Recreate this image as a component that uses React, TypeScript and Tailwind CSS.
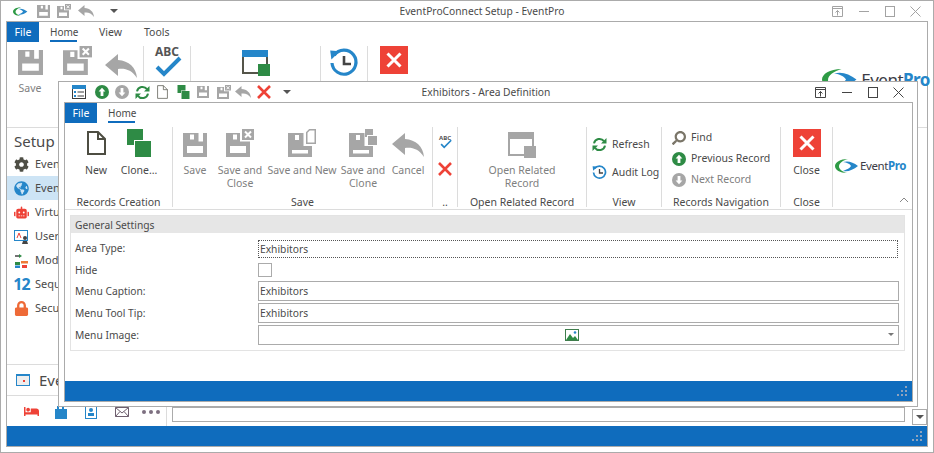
import type { ReactNode } from 'react'
import { FaBed, FaCog, FaGlobeAmericas, FaLock, FaRobot, FaSearch } from 'react-icons/fa'

const GRAY = '#a6a6a6'

function SaveIcon({ size = 24, color = GRAY }: { size?: number; color?: string }) {
  return (
    <svg width={size} height={size} viewBox="0 0 24 24" className="shrink-0">
      <path fill={color} fillRule="evenodd" d="M0 0H24V24H0ZM15.5 0V8.5H20V0ZM4 13H20V20H4ZM7 1.5H11V6.5H7Z" />
    </svg>
  )
}

function SaveCloseIcon({ size = 28, color = GRAY }: { size?: number; color?: string }) {
  return (
    <svg width={size} height={size} viewBox="0 0 28 28" className="shrink-0">
      <path fill={color} fillRule="evenodd" d="M0 4H14V12.5H24V28H0ZM4 17H20V24H4ZM7 5.5H11V10.5H7Z" />
      <rect x="16" y="0" width="12" height="11" fill={color} />
      <path d="M19 2.5L25 8.5M25 2.5L19 8.5" stroke="#fff" strokeWidth="2" />
    </svg>
  )
}

function SaveNewIcon() {
  return (
    <svg width="28" height="28" viewBox="0 0 28 28" className="shrink-0">
      <path fill={GRAY} fillRule="evenodd" d="M0 4H15.5V17H24V28H0ZM4 21H20V24.5H4ZM7 6H11V11H7Z" />
      <path d="M18.75 3.5L21.5.75H27.25V14.25H18.75Z" fill="none" stroke={GRAY} strokeWidth="1.5" />
    </svg>
  )
}

function SaveCloneIcon() {
  return (
    <svg width="28" height="28" viewBox="0 0 28 28" className="shrink-0">
      <path fill={GRAY} fillRule="evenodd" d="M0 4H15.5V17H24V28H0ZM4 21H20V24.5H4ZM7 6H11V11H7Z" />
      <rect x="16" y="0" width="8" height="8" fill={GRAY} />
      <rect x="18" y="6" width="10" height="10" fill="#fff" />
      <rect x="19" y="7" width="9" height="9" fill={GRAY} />
    </svg>
  )
}

function UndoIcon({ w = 32, h = 24, color = GRAY }: { w?: number; h?: number; color?: string }) {
  return (
    <svg width={w} height={h} viewBox="0 0 32 24" className="shrink-0">
      <path fill={color} d="M13 0L0 11L13 22V15C20 14 27 16 32 24C31 13 24 7 13 6Z" />
    </svg>
  )
}

function NewIcon({ w = 19, h = 24, sw = 2 }: { w?: number; h?: number; sw?: number }) {
  return (
    <svg width={w} height={h} viewBox="0 0 19 24" className="shrink-0">
      <path d="M1 1H11L18 8V23H1Z M11 1V8H18" fill="none" stroke="#4d4d42" strokeWidth={sw} />
    </svg>
  )
}

function CloneIcon({ w = 24, h = 28 }: { w?: number; h?: number }) {
  return (
    <svg width={w} height={h} viewBox="0 0 24 28" className="shrink-0">
      <rect x="0" y="0" width="16" height="16" fill="#2e8b45" />
      <rect x="7" y="11" width="17" height="17" fill="#fff" />
      <rect x="8" y="12" width="16" height="16" fill="#2e8b45" />
    </svg>
  )
}

function RedX({ size = 14, sw = 2.6 }: { size?: number; sw?: number }) {
  return (
    <svg width={size} height={size} viewBox="0 0 14 14" className="shrink-0">
      <path d="M1 1L13 13M13 1L1 13" stroke="#ee4237" strokeWidth={sw} />
    </svg>
  )
}

function RedBox({ size = 28 }: { size?: number }) {
  return (
    <svg width={size} height={size} viewBox="0 0 28 28" className="shrink-0">
      <rect width="28" height="28" fill="#ee4237" />
      <path d="M7.5 7.5L20.5 20.5M20.5 7.5L7.5 20.5" stroke="#fff" strokeWidth="3" />
    </svg>
  )
}

function RoundArrow({ up, color, size = 14 }: { up: boolean; color: string; size?: number }) {
  return (
    <svg width={size} height={size} viewBox="0 0 14 14" className="shrink-0">
      <circle cx="7" cy="7" r="7" fill={color} />
      <path fill="#fff" d={up ? 'M7 2.8L10.4 6.6H8.4V11H5.6V6.6H3.6Z' : 'M7 11.2L10.4 7.4H8.4V3H5.6V7.4H3.6Z'} />
    </svg>
  )
}

function RefreshIcon({ size = 15 }: { size?: number }) {
  return (
    <svg width={size} height={size} viewBox="0 0 15 15" className="shrink-0">
      <path d="M2 6.4A5.6 5.6 0 0 1 12 4.2" fill="none" stroke="#2e8b45" strokeWidth="2" />
      <path d="M13 8.6A5.6 5.6 0 0 1 3 10.8" fill="none" stroke="#2e8b45" strokeWidth="2" />
      <path d="M14.5 1V6.5H9Z" fill="#2e8b45" />
      <path d="M.5 14V8.5H6Z" fill="#2e8b45" />
    </svg>
  )
}

function HistoryIcon({ size = 15, sw = 1.7 }: { size?: number; sw?: number }) {
  return (
    <svg width={size} height={size} viewBox="0 0 15 15" className="shrink-0">
      <path d="M2.6 3.6A6 6 0 1 1 1.5 7.5" fill="none" stroke="#2586c9" strokeWidth={sw} />
      <path d="M0.6 1.2L5.4 1.6L1.2 5.8Z" fill="#2586c9" />
      <path d="M7.5 4V8H11" fill="none" stroke="#444" strokeWidth="1.3" />
    </svg>
  )
}

function AbcCheck({ w = 30, h = 32, big = true }: { w?: number; h?: number; big?: boolean }) {
  return (
    <div className="relative shrink-0" style={{ width: w, height: h }}>
      <span
        className={`absolute left-0 top-0 w-full text-center font-bold text-[#555] leading-none ${big ? 'text-[12px]' : 'text-[6px]'}`}
      >
        ABC
      </span>
      <svg width={w} height={h} viewBox="0 0 30 32" className="absolute left-0 top-0">
        <path d="M5 21L12 28L28 12" fill="none" stroke="#2586c9" strokeWidth="4" />
      </svg>
    </div>
  )
}

function RelatedIcon({ active }: { active: boolean }) {
  const top = active ? '#2586c9' : GRAY
  const line = active ? '#55554a' : GRAY
  const box = active ? '#2e8b45' : GRAY
  return (
    <svg width="28" height="26" viewBox="0 0 28 26" className="shrink-0">
      <rect width="26" height="7" fill={top} />
      <path d="M1 7V23H16" fill="none" stroke={line} strokeWidth="2" />
      <path d="M25 7V14" stroke={line} strokeWidth="2" />
      <rect x="16" y="14" width="12" height="12" fill={box} />
    </svg>
  )
}

function ListIcon() {
  return (
    <svg width="14" height="14" viewBox="0 0 14 14" className="shrink-0">
      <rect x=".5" y=".5" width="13" height="13" fill="#fff" stroke="#3c3c3c" />
      <rect width="14" height="4" fill="#2586c9" />
      <rect x="2" y="6" width="2" height="2" fill="#2586c9" />
      <rect x="2" y="10" width="2" height="2" fill="#2586c9" />
      <path d="M5.5 7H12M5.5 11H12" stroke="#3c3c3c" />
    </svg>
  )
}

function LogoMark({ w = 24, h = 14 }: { w?: number; h?: number }) {
  return (
    <svg width={w} height={h} viewBox="0 0 24 14" className="shrink-0">
      <path fill="#2e9b45" d="M13 0C5 0 0 3.5 0 7C0 11 5 14 12 14C7 12.5 4 10 4 7.5C4 4 8 1.5 13 0Z" />
      <path fill="#2586c9" d="M8 3C13 1.5 18 3 23 7C18 11 13 13 8 12C12 10.5 15 9 16 7C15 5 12 3.5 8 3Z" />
    </svg>
  )
}

function Logo({ className }: { className?: string }) {
  return (
    <div className={`flex items-center gap-[1px] ${className ?? ''}`}>
      <LogoMark />
      <span className="text-[11.5px] leading-none tracking-[-0.4px] text-[#3c3c46]">
        Event<span className="text-[#2586c9] font-bold">Pro</span>
      </span>
    </div>
  )
}

function WinButtons({ color }: { color: string }) {
  return (
    <div className="flex items-center" style={{ color }}>
      <svg width="11" height="11" viewBox="0 0 11 11" className="mr-[16px]">
        <path d="M.5.5H10.5V10.5H.5ZM.5 2.5H10.5M5.5 9.5V4.5M3.5 6.5L5.5 4.5L7.5 6.5" fill="none" stroke="currentColor" />
      </svg>
      <svg width="10" height="11" viewBox="0 0 10 11" className="mr-[16px]">
        <path d="M0 5.5H10" stroke="currentColor" />
      </svg>
      <svg width="10" height="11" viewBox="0 0 10 11" className="mr-[15px]">
        <rect x=".5" y=".5" width="9" height="10" fill="none" stroke="currentColor" />
      </svg>
      <svg width="11" height="11" viewBox="0 0 11 11">
        <path d="M.5.5L10.5 10.5M10.5.5L.5 10.5" stroke="currentColor" />
      </svg>
    </div>
  )
}

function Grip() {
  return (
    <svg width="11" height="11" viewBox="0 0 11 11" className="shrink-0">
      <path fill="#8fa3bd" d="M8 0h2v2H8zM4 4h2v2H4zM8 4h2v2H8zM0 8h2v2H0zM4 8h2v2H4zM8 8h2v2H8z" />
    </svg>
  )
}

function Caret() {
  return <span className="inline-block w-0 h-0 border-x-[4px] border-x-transparent border-t-[4px] border-t-[#555]" />
}

function BigButton({
  width,
  icon,
  disabled,
  children
}: {
  width: number
  icon: ReactNode
  disabled?: boolean
  children: ReactNode
}) {
  return (
    <div className="flex flex-col items-center shrink-0" style={{ width }}>
      <div className="h-[37px] flex items-center justify-center pb-[1px]">{icon}</div>
      <div className={`text-center leading-[13px] whitespace-nowrap ${disabled ? 'text-[#808080]' : 'text-[#4a4a4a]'}`}>
        {children}
      </div>
    </div>
  )
}

function Group({
  width,
  label,
  last,
  children
}: {
  width: number
  label: string
  last?: boolean
  children: ReactNode
}) {
  return (
    <div className="flex flex-col shrink-0 h-[80px] mt-[4px]" style={{ width }}>
      <div className={`flex-1 flex flex-col ${last ? '' : 'border-r border-[#dcdcdc]'}`}>
        <div className="flex-1 min-h-0">{children}</div>
        <div className="h-[15px] leading-[20px] text-center text-[#4a4a4a] whitespace-nowrap">{label}</div>
      </div>
    </div>
  )
}

function SmallRow({ icon, disabled, children }: { icon: ReactNode; disabled?: boolean; children: ReactNode }) {
  return (
    <div className="h-[21px] flex items-center gap-[5px] whitespace-nowrap">
      {icon}
      <span className={disabled ? 'text-[#808080]' : 'text-[#4a4a4a]'}>{children}</span>
    </div>
  )
}

function FormRow({ label, height, children }: { label: string; height: number; children: ReactNode }) {
  return (
    <div className="flex items-center" style={{ height }}>
      <div className="w-[187px] pl-[4px] pt-[2px] shrink-0 text-[#4a4a4a]">{label}</div>
      {children}
    </div>
  )
}

function TextBox({ value }: { value: string }) {
  return (
    <div className="w-[641px] h-[20px] border border-[#ababab] px-[1px] leading-[19px] text-[#4a4a4a]">{value}</div>
  )
}

const navItems: { icon: ReactNode; label: string; active?: boolean }[] = [
  { icon: <FaCog size={15} color="#4f4f46" />, label: 'Even' },
  { icon: <FaGlobeAmericas size={15} color="#2586c9" />, label: 'Even', active: true },
  { icon: <FaRobot size={15} color="#ee4237" />, label: 'Virtua' },
  {
    icon: (
      <svg width="15" height="15" viewBox="0 0 15 15">
        <rect x=".5" y="1.5" width="13" height="10" fill="#fff" stroke="#2586c9" />
        <path d="M3 9L5 4L7 9" fill="none" stroke="#ee4237" />
        <circle cx="11" cy="9" r="2" fill="#444" />
        <path d="M8 15L9 12H13L14 15Z" fill="#444" />
      </svg>
    ),
    label: 'User'
  },
  {
    icon: (
      <svg width="15" height="15" viewBox="0 0 15 15">
        <path d="M1 3H6" stroke="#444" strokeWidth="1.5" />
        <path d="M5 1L8 3L5 5Z" fill="#2e8b45" />
        <rect x="7" y="8" width="7" height="2.5" fill="#ee7a37" />
        <rect x="1" y="9" width="5" height="3" fill="#2e8b45" />
        <rect x="1" y="12.5" width="5" height="2.5" fill="#2586c9" />
        <rect x="8" y="12" width="5" height="3" fill="#ee4237" />
      </svg>
    ),
    label: 'Mode'
  },
  { icon: <span className="text-[16px] leading-none font-bold text-[#2586c9] tracking-[-1px]">12</span>, label: 'Sequ' },
  { icon: <FaLock size={15} color="#ee6a37" />, label: 'Secu' }
]

export default function App() {
  return (
    <div className="relative w-[934px] h-[453px] overflow-hidden bg-white border border-[#ababab] font-['Noto_Sans','Liberation_Sans',sans-serif] text-[10.5px]">
      {/* main window */}
      <div className="h-[20px] flex items-center pl-[12px] pr-[12px]">
        <LogoMark w={15} h={11} />
        <div className="flex items-center ml-[9px] gap-[7px]">
          <SaveIcon size={13} />
          <SaveCloseIcon size={14} />
          <UndoIcon w={16} h={12} />
          <span className="ml-[9px] flex"><Caret /></span>
        </div>
        <div className="flex-1 text-center text-[#4a4a4a] text-[10.25px] pl-[14px] pt-[2px]">EventProConnect Setup - EventPro</div>
        <WinButtons color="#a3a3a3" />
      </div>
      <div className="mx-[5px] w-[922px] h-[426px] border border-[#ababab] flex flex-col">
        <div className="h-[20px] flex items-stretch shrink-0 text-[#4a4a4a] leading-[20px]">
          <div className="w-[32px] bg-[#0f6cbd] text-white text-center">File</div>
          <div className="ml-[11px] w-[27px] relative text-[10px]">
            Home
            <div className="absolute left-0 right-0 bottom-0 h-[2px] bg-[#0f6cbd]" />
          </div>
          <div className="ml-[22px]">View</div>
          <div className="ml-[22px]">Tools</div>
        </div>
        <div className="h-[86px] shrink-0 flex border-b border-[#dcdcdc]">
          <div className="w-[137px] border-r border-[#dcdcdc] my-[4px] flex">
            <div className="w-[46px] flex flex-col items-center pt-[4px] text-[#808080]">
              <SaveIcon size={25} />
              <span className="mt-[6px]">Save</span>
            </div>
            <div className="w-[42px] ml-[10px]"><SaveCloseIcon size={29} /></div>
            <div className="pt-[8px]"><UndoIcon /></div>
          </div>
          <div className="w-[47px] border-r border-[#dcdcdc] my-[4px] flex justify-center"><AbcCheck /></div>
          <div className="w-[130px] border-r border-[#dcdcdc] my-[4px] flex justify-center pt-[4px]"><RelatedIcon active /></div>
          <div className="w-[47px] border-r border-[#dcdcdc] my-[4px] flex justify-center pt-[2px]"><HistoryIcon size={30} sw={1.6} /></div>
          <div className="w-[49px] flex justify-center pt-[4px] pl-[2px]"><RedBox /></div>
          <div className="flex-1 flex justify-end pt-[27px]">
            <div className="flex items-center gap-[3px] h-[20px] -mr-[3px]">
              <LogoMark w={36} h={21} />
              <span className="text-[17px] tracking-[-0.5px] text-[#3c3c46] leading-none">Event<span className="text-[#2586c9] font-bold">Pro</span></span>
            </div>
          </div>
        </div>
        <div className="flex-1 min-h-0 flex">
          <div className="w-[51px] shrink-0 overflow-hidden flex flex-col">
            <div className="h-[24px] pl-[7px] pt-[3px] text-[15px] leading-[20px] text-[#4a4a4a]">Setup</div>
            {navItems.map((item, i) => (
              <div
                key={i}
                className={`h-[24px] shrink-0 pl-[7px] flex items-center gap-[6px] text-[11px] text-[#4a4a4a] whitespace-nowrap ${item.active ? 'bg-[#cde4f5]' : ''}`}
              >
                <span className="w-[15px] flex justify-center shrink-0">{item.icon}</span>
                {item.label}
              </div>
            ))}
            <div className="flex-1" />
            <div className="h-[32px] border-y border-[#dcdcdc] pl-[9px] flex items-center gap-[9px] text-[15px] text-[#4a4a4a]">
              <svg width="14" height="12" viewBox="0 0 14 12" className="shrink-0">
                <rect x=".5" y=".5" width="13" height="11" fill="#eee" stroke="#2586c9" />
                <rect y="0" width="14" height="2" fill="#2586c9" />
                <rect x="7" y="6" width="2" height="2" fill="#ee4237" />
              </svg>
              Eve
            </div>
            <div className="h-[30px]" />
          </div>
        </div>
        <div className="h-[20px] shrink-0 bg-[#0f6cbd] flex items-end justify-end pr-[4px] pb-[4px]">
          <Grip />
        </div>
      </div>

      {/* strip icons and the search box under the dialog */}
      <div className="absolute left-[23px] top-[403px] w-[903px] h-[15px] flex items-center">
        <FaBed size={15} color="#ee4237" />
        <svg width="12" height="14" viewBox="0 0 12 14" className="ml-[16px]">
          <path fill="#2586c9" d="M0 4H12V14H0Z M2 1H4V4H2Z M7 1H9V4H7Z" />
        </svg>
        <svg width="12" height="14" viewBox="0 0 12 14" className="ml-[18px]">
          <rect x=".5" y=".5" width="11" height="13" fill="#fff" stroke="#2586c9" />
          <circle cx="6" cy="5" r="2" fill="#2586c9" />
          <rect x="3" y="8" width="6" height="3" fill="#2586c9" />
        </svg>
        <svg width="14" height="10" viewBox="0 0 14 10" className="ml-[18px]">
          <path d="M.5.5H13.5V9.5H.5ZM.5.5L7 6L13.5.5M.5 9.5L5 4.5M13.5 9.5L9 4.5" fill="none" stroke="#6e5f6e" />
        </svg>
        <div className="ml-[13px] flex gap-[3px]">
          <span className="w-[4px] h-[4px] rounded-full bg-[#7d6f80]" />
          <span className="w-[4px] h-[4px] rounded-full bg-[#7d6f80]" />
          <span className="w-[4px] h-[4px] rounded-full bg-[#7d6f80]" />
        </div>
        <div className="absolute left-[142px] top-[0px] w-[1px] h-[22px] bg-[#dcdcdc]" />
        <div className="absolute left-[148px] top-[3px] w-[733px] h-[15px] border border-[#ababab] bg-white" />
        <div className="absolute right-[0px] top-[5px] w-[15px] h-[16px] border border-[#ababab] flex items-center justify-center">
          <Caret />
        </div>
      </div>

      {/* dialog */}
      <div className="absolute left-[57px] top-[80px] w-[860px] h-[326px] bg-white border border-[#ababab] flex flex-col">
        <div className="h-[20px] flex items-center pl-[13px] pr-[13px] shrink-0">
          <ListIcon />
          <div className="ml-[9px] flex items-center gap-[6px]">
            <RoundArrow up color="#2e8b45" />
            <RoundArrow up={false} color={GRAY} />
            <RefreshIcon />
          </div>
          <div className="ml-[7px]"><NewIcon w={11} h={14} sw={1.2} /></div>
          <div className="ml-[9px]"><CloneIcon w={13} h={14} /></div>
          <div className="ml-[7px]"><SaveIcon size={12} /></div>
          <div className="ml-[8px]"><SaveCloseIcon size={14} /></div>
          <div className="ml-[4px]"><UndoIcon w={16} h={12} /></div>
          <div className="ml-[6px]"><RedX /></div>
          <div className="ml-[12px] flex"><Caret /></div>
          <div className="flex-1 text-center text-[#4a4a4a] text-[10.25px] pr-[134px] pt-[2px]">Exhibitors - Area Definition</div>
          <WinButtons color="#444" />
        </div>
        <div className="ml-[5px] w-[849px] h-[300px] border border-[#ababab] flex flex-col">
          <div className="h-[20px] flex shrink-0 leading-[20px]">
            <div className="w-[32px] bg-[#0f6cbd] text-white text-center">File</div>
            <div className="ml-[11px] w-[27px] relative text-[#4a4a4a] text-[10px]">
              Home
              <div className="absolute left-0 right-0 bottom-0 h-[2px] bg-[#0f6cbd]" />
            </div>
          </div>
          <div className="h-[87px] shrink-0 flex border-b border-[#dcdcdc]">
            <Group width={108} label="Records Creation">
              <div className="flex pl-[11px]">
                <BigButton width={40} icon={<span className="flex -translate-y-[2px]"><NewIcon /></span>}>New</BigButton>
                <BigButton width={46} icon={<span className="flex -translate-y-[2px]"><CloneIcon /></span>}>Clone…</BigButton>
              </div>
            </Group>
            <Group width={260} label="Save">
              <div className="flex">
                <BigButton width={44} disabled icon={<SaveIcon />}>Save</BigButton>
                <BigButton width={46} disabled icon={<span className="flex -translate-y-[2px]"><SaveCloseIcon /></span>}>Save and<br />Close</BigButton>
                <BigButton width={78} disabled icon={<span className="flex -translate-y-[2px]"><SaveNewIcon /></span>}>Save and New</BigButton>
                <BigButton width={44} disabled icon={<span className="flex -translate-y-[2px]"><SaveCloneIcon /></span>}>Save and<br />Clone</BigButton>
                <BigButton width={46} disabled icon={<UndoIcon />}>Cancel</BigButton>
              </div>
            </Group>
            <Group width={25} label="..">
              <div className="flex flex-col items-center pt-[8px] gap-[13px]">
                <AbcCheck w={15} h={14} big={false} />
                <RedX />
              </div>
            </Group>
            <Group width={129} label="Open Related Record">
              <div className="flex justify-center">
                <BigButton width={100} disabled icon={<RelatedIcon active={false} />}>Open Related<br />Record</BigButton>
              </div>
            </Group>
            <Group width={75} label="View">
              <div className="flex flex-col pl-[5px] pt-[7px] gap-[7px]">
                <SmallRow icon={<RefreshIcon />}>Refresh</SmallRow>
                <SmallRow icon={<HistoryIcon />}>Audit Log</SmallRow>
              </div>
            </Group>
            <Group width={119} label="Records Navigation">
              <div className="flex flex-col pl-[10px]">
                <SmallRow icon={<FaSearch size={14} color="#7a7568" className="-scale-x-100" />}>Find</SmallRow>
                <SmallRow icon={<RoundArrow up color="#2e8b45" />}>Previous Record</SmallRow>
                <SmallRow disabled icon={<RoundArrow up={false} color={GRAY} />}>Next Record</SmallRow>
              </div>
            </Group>
            <Group width={52} label="Close">
              <BigButton width={51} icon={<span className="flex -translate-y-[2px]"><RedBox /></span>}>Close</BigButton>
            </Group>
            <div className="relative flex-1 flex items-start pl-[2px] pt-[36px]">
              <Logo />
              <svg width="10" height="6" viewBox="0 0 10 6" className="absolute right-[3px] bottom-[6px]">
                <path d="M1 5L5 1L9 5" fill="none" stroke="#888" />
              </svg>
            </div>
          </div>
          <div className="flex-1 min-h-0 px-[5px] pt-[5px]">
            <div className="w-[835px] h-[136px] border border-[#e3e3e3] text-[10.25px]">
              <div className="h-[17px] bg-[#e6e6e6] pl-[4px] leading-[19px] text-[#4a4a4a]">General Settings</div>
              <div className="pt-[4px]">
                <FormRow label="Area Type:" height={22}>
                  <div className="w-[640px] h-[18px] mt-[1px] border border-dotted border-[#555] px-[1px] leading-[17px] text-[#4a4a4a]">Exhibitors</div>
                </FormRow>
                <FormRow label="Hide" height={21}>
                  <div className="w-[14px] h-[14px] border border-[#ababab]" />
                </FormRow>
                <FormRow label="Menu Caption:" height={22}><TextBox value="Exhibitors" /></FormRow>
                <FormRow label="Menu Tool Tip:" height={22}><TextBox value="Exhibitors" /></FormRow>
                <FormRow label="Menu Image:" height={22}>
                  <div className="relative w-[641px] h-[20px] border border-[#ababab] flex items-center pl-[306px]">
                    <svg width="14" height="12" viewBox="0 0 14 12">
                      <rect x=".5" y=".5" width="13" height="11" fill="#fff" stroke="#3f7d4c" />
                      <path d="M1 11L5 5L8 9L10 7L13 11Z" fill="#2e8b45" />
                      <circle cx="10" cy="3.5" r="1.3" fill="#2586c9" />
                    </svg>
                    <span className="absolute right-[4px] top-[7px] w-0 h-0 border-x-[3px] border-x-transparent border-t-[3px] border-t-[#777]" />
                  </div>
                </FormRow>
              </div>
            </div>
          </div>
          <div className="h-[20px] shrink-0 bg-[#0f6cbd] flex items-end justify-end pr-[4px] pb-[4px]">
            <Grip />
          </div>
        </div>
      </div>
    </div>
  )
}
